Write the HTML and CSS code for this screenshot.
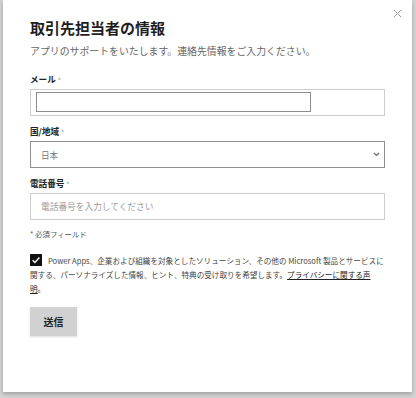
FILE: index.html
```html
<html>
<head>
  <title>取引先担当者の情報</title>
  <meta charset="utf-8">
  <meta name="viewport" content="width=device-width">
  <link rel="stylesheet" href="styles.css">
</head>
<body>

<div class="dialog">
  <button class="close" aria-label="閉じる">
    <svg width="9" height="9" viewBox="0 0 9 9"><path d="M1 1L8 8M8 1L1 8" stroke="#9a9a9a" stroke-width="1" fill="none"/></svg>
  </button>

  <h1>取引先担当者の情報</h1>
  <p class="lead">アプリのサポートをいたします。連絡先情報をご入力ください。</p>

  <form>
    <div class="field">
      <label>メール <span class="req">*</span></label>
      <div class="box">
        <input class="inner" type="text">
      </div>
    </div>
    <div class="field">
      <label>国/地域 <span class="req">*</span></label>
      <div class="box select">
        <span>日本</span>
        <svg width="7" height="5" viewBox="0 0 7 5"><path d="M1 1L3.5 3.5L6 1" stroke="#666" stroke-width="1.2" fill="none"/></svg>
      </div>
    </div>
    <div class="field">
      <label>電話番号 <span class="req">*</span></label>
      <input class="box phone" type="text" placeholder="電話番号を入力してください">
    </div>

    <p class="note">* 必須フィールド</p>

    <p class="consent"><span class="check"><svg width="12" height="12" viewBox="0 0 12 12"><path d="M2.6 6.2L4.9 8.4L9.4 3.6" stroke="#fff" stroke-width="1.4" fill="none"/></svg></span>Power Apps、企業および組織を対象としたソリューション、その他の Microsoft 製品とサービスに関する、パーソナライズした情報、ヒント、特典の受け取りを希望します。<a href="#">プライバシーに関する声明</a>。</p>

    <button class="submit" type="button">送信</button>
  </form>
</div>

</body>
</html>
```

FILE: styles.css
```css
* { box-sizing: border-box; }
html, body { margin: 0; padding: 0; }
body { background-color: #d3d3d3; padding: 0 4px 6px 3px; font-family: "Noto Sans CJK JP", "Noto Sans", sans-serif; color: #222; }

.dialog { position: relative; background-color: white; height: 392px; padding: 18px 27px 0 27px; box-shadow: 0 2px 4px rgba(0,0,0,0.25); }
.close { position: absolute; top: 9px; right: 10px; border: none; background: none; padding: 0; width: 9px; height: 9px; }
.close svg { display: block; }

h1 { margin: 0; font-size: 15px; line-height: 20px; font-weight: bold; color: #1e1e1e; }
.lead { margin: 6px 0 0 0; font-size: 9.9px; line-height: 14px; color: #666; }

form { margin: 15px 0 0 0; }
.field { display: flex; flex-direction: column; margin-bottom: 9px; }
.field label { font-size: 8.6px; line-height: 12px; font-weight: bold; color: #222; margin-bottom: 3px; }
.req { color: #999; font-weight: normal; font-size: 7px; }

.box { display: block; width: 100%; height: 27px; border: 1px solid #cdcdcd; background: white; margin: 0; font-family: inherit; }
.inner { display: block; width: 275px; height: 20px; margin: 2px 0 0 5px; border: 1px solid #8c8c8c; padding: 0; outline: none; }
.select { display: flex; align-items: center; justify-content: space-between; border-color: #8e8e8e; padding: 0 4px 0 10px; font-size: 8.6px; color: #777; }
.phone { padding: 0 10px; font-size: 8.7px; color: #333; outline: none; }
.phone::placeholder { color: #9c9c9c; }

.note { margin: 8px 0 0 0; font-size: 7.4px; line-height: 10px; color: #555; }

.consent { margin: 15px 0 0 0; font-size: 7.6px; line-height: 14px; color: #444; }
.consent a { color: #222; text-decoration: underline; }
.check { display: inline-block; vertical-align: top; width: 12px; height: 12px; background-color: #111; margin-right: 6px; }
.check svg { display: block; }

.submit { display: block; margin-top: 11px; width: 47px; height: 29px; border: none; background-color: #d1d1d1; font-family: inherit; font-size: 10px; font-weight: bold; color: #222; box-shadow: 0 1px 2px rgba(0,0,0,0.15); padding: 0; }
```
